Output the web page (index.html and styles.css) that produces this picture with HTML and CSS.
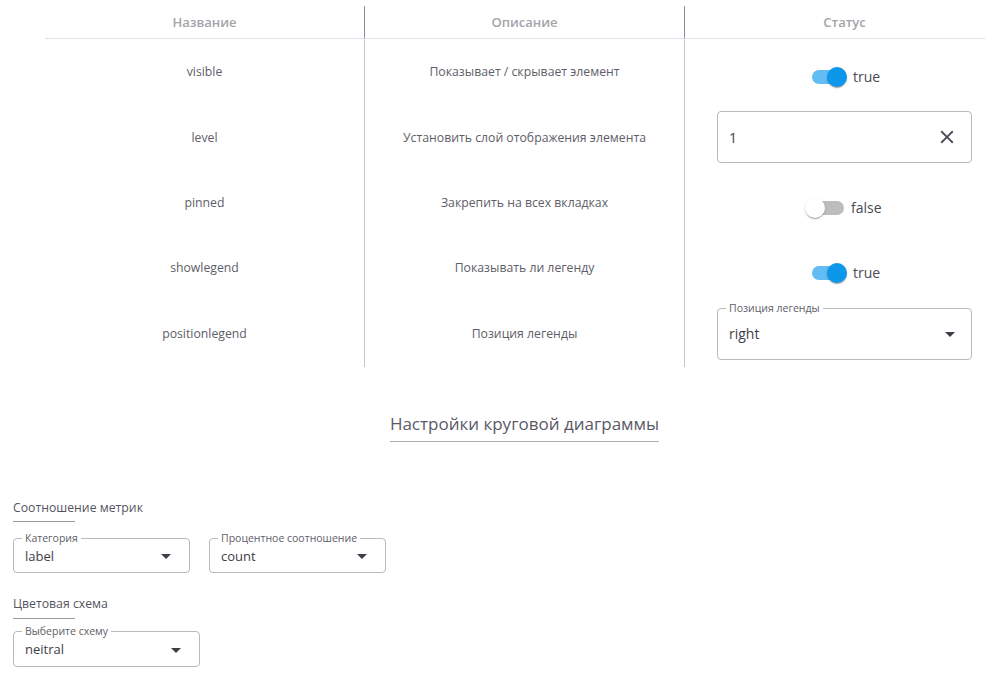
FILE: index.html
```html
<!DOCTYPE html>
<html lang="ru">
<head>
<meta charset="utf-8">
<link rel="stylesheet" href="styles.css">
</head>
<body>
<div class="page">
  <table class="props">
    <thead>
      <tr>
        <th>Название</th>
        <th>Описание</th>
        <th>Статус</th>
      </tr>
    </thead>
    <tbody>
      <tr class="r1">
        <td>visible</td>
        <td>Показывает / скрывает элемент</td>
        <td><span class="switch on"><span class="track"></span><span class="thumb"></span></span><span class="sw-label">true</span></td>
      </tr>
      <tr class="r2">
        <td>level</td>
        <td>Установить слой отображения элемента</td>
        <td>
          <div class="field">
            <span class="value">1</span>
            <svg class="clear" width="22" height="22" viewBox="0 0 24 24"><path d="M19 6.41 17.59 5 12 10.59 6.41 5 5 6.41 10.59 12 5 17.59 6.41 19 12 13.41 17.59 19 19 17.59 13.41 12z" fill="#4a4a5a"/></svg>
          </div>
        </td>
      </tr>
      <tr class="r3">
        <td>pinned</td>
        <td>Закрепить на всех вкладках</td>
        <td><span class="switch"><span class="track"></span><span class="thumb"></span></span><span class="sw-label">false</span></td>
      </tr>
      <tr class="r4">
        <td>showlegend</td>
        <td>Показывать ли легенду</td>
        <td><span class="switch on"><span class="track"></span><span class="thumb"></span></span><span class="sw-label">true</span></td>
      </tr>
      <tr class="r5">
        <td>positionlegend</td>
        <td>Позиция легенды</td>
        <td>
          <div class="field select big">
            <span class="legend">Позиция легенды</span>
            <span class="value">right</span>
            <span class="caret"></span>
          </div>
        </td>
      </tr>
    </tbody>
  </table>

  <div class="section-title"><span>Настройки круговой диаграммы</span></div>

  <div class="group">
    <div class="group-title first">Соотношение метрик</div>
    <div class="row">
      <div class="field select small w176">
        <span class="legend">Категория</span>
        <span class="value">label</span>
        <span class="caret"></span>
      </div>
      <div class="field select small w176">
        <span class="legend">Процентное соотношение</span>
        <span class="value">count</span>
        <span class="caret"></span>
      </div>
    </div>
    <div class="group-title second">Цветовая схема</div>
    <div class="row">
      <div class="field select small tall w186">
        <span class="legend">Выберите схему</span>
        <span class="value">neitral</span>
        <span class="caret"></span>
      </div>
    </div>
  </div>
</div>
</body>
</html>
```
FILE: styles.css
```css
html, body {
  margin: 0;
  padding: 0;
  background: #fff;
  overflow: hidden;
}
body {
  font-family: "Open Sans", "Liberation Sans", sans-serif;
  color: #5a5a66;
  width: 985px;
  height: 682px;
}
.page {
  padding-top: 6px;
}
.props {
  margin-left: 45px;
  border-collapse: collapse;
  table-layout: fixed;
  width: 959px;
}
.props th, .props td {
  width: 319px;
  text-align: center;
  padding: 0;
  vertical-align: middle;
}
.props th {
  height: 32px;
  font-size: 13px;
  font-weight: 600;
  color: #a4a4aa;
  border-bottom: 1px solid #e2e0ea;
}
.props th:nth-child(2),
.props th:nth-child(3) {
  border-left: 1px solid #8e8e94;
}
.props td {
  font-size: 12.25px;
  color: #5e5e68;
}
.props td:nth-child(2),
.props td:nth-child(3) {
  border-left: 1px solid #c6c3d8;
}
.props td:nth-child(3) {
  text-align: left;
  padding-left: 32px;
}
.props tr.r1 td { height: 65px; }
.props tr.r2 td { height: 66px; }
.props tr.r3 td { height: 65px; }
.props tr.r4 td { height: 65px; }
.props tr.r5 td { height: 67px; }

.switch {
  position: relative;
  display: inline-block;
  vertical-align: middle;
  width: 36px;
  height: 20px;
  margin-left: 94px;
  margin-top: 10px;
}
.r3 .switch { margin-left: 92px; }
.track {
  position: absolute;
  left: 1px;
  top: 3px;
  width: 34px;
  height: 14px;
  border-radius: 7px;
  background: #bdbdbd;
}
.thumb {
  position: absolute;
  left: -4px;
  top: 0;
  width: 20px;
  height: 20px;
  border-radius: 50%;
  background: #fff;
  box-shadow: 0 2px 1px -1px rgba(0,0,0,.2), 0 1px 1px 0 rgba(0,0,0,.14), 0 1px 3px 0 rgba(0,0,0,.12);
}
.switch.on .track { background: #62bdf5; }
.switch.on .thumb { left: 16px; background: #0d97ea; }
.sw-label {
  display: inline-block;
  vertical-align: middle;
  margin-top: 10px;
  margin-left: 6px;
  font-size: 14px;
  color: #4a4a55;
}

.field {
  position: relative;
  box-sizing: border-box;
  border: 1px solid #b9b9c0;
  border-radius: 4px;
  display: flex;
  align-items: center;
  background: #fff;
}
.props .field {
  width: 255px;
  height: 52px;
  padding: 0 13px 0 11px;
}
.field .value {
  flex: 1;
  font-size: 14px;
  color: #3e3e48;
}
.field .clear {
  flex: none;
}
.field .legend {
  position: absolute;
  left: 8px;
  top: -8px;
  padding: 0 3px;
  background: #fff;
  font-size: 10.5px;
  line-height: 14px;
  color: #60606a;
}
.field .caret {
  flex: none;
  width: 0;
  height: 0;
  border-left: 5px solid transparent;
  border-right: 5px solid transparent;
  border-top: 5px solid #3e3e48;
  margin-right: 2px;
  margin-top: 2px;
}
.field.big .caret { margin-right: 3px; }

.section-title {
  margin-top: 45px;
  text-align: center;
}
.section-title span {
  display: inline-block;
  font-size: 17px;
  color: #5a5a66;
  padding-bottom: 6px;
  border-bottom: 1px solid #adadb5;
  margin-left: 64px;
}

.group {
  padding-left: 13px;
  margin-top: 57px;
}
.group-title {
  display: block;
  width: max-content;
  font-size: 12.25px;
  color: #55555f;
  position: relative;
  padding-bottom: 6px;
}
.group-title::after {
  content: "";
  position: absolute;
  left: 0;
  bottom: 0;
  width: 62px;
  height: 1px;
  background: #9a9aa2;
}
.group-title.second {
  margin-top: 22px;
  padding-bottom: 7px;
}
.row {
  display: flex;
  gap: 19px;
  margin-top: 16px;
}
.group-title.second + .row { margin-top: 12px; }
.field.small {
  height: 35px;
  padding: 0 16px 0 11px;
}
.field.small.tall { height: 36px; }
.field.small .value { font-size: 13px; }
.w176 { width: 177px; }
.w186 { width: 187px; }
```
